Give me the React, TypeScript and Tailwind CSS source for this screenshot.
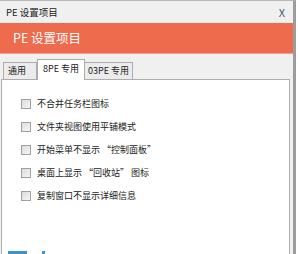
import React from 'react';

const font = { fontFamily: '"Microsoft YaHei", "Noto Sans CJK SC", "Liberation Sans", sans-serif' };

const options = [
  '不合并任务栏图标',
  '文件夹视图使用平铺模式',
  '开始菜单不显示 “控制面板”',
  '桌面上显示 “回收站” 图标',
  '复制窗口不显示详细信息',
];

export default function App() {
  return (
    <div className="w-[298px] h-[254px] overflow-hidden bg-white" style={font}>
      <div className="w-[296px] h-[254px] bg-[#f0f0f0] border-t border-[#b8b8b8] border-r-[3px] border-r-[#9c9c9c] flex flex-col">
        {/* title bar */}
        <div className="h-[22px] flex items-center justify-between pl-[6px] pr-[8px] text-[9.5px] text-[#222] whitespace-nowrap">
          <span>PE 设置项目</span>
          <span className="text-[11px] text-[#4a5a70]">X</span>
        </div>

        {/* banner */}
        <div className="h-[31px] bg-[#ee6b4d] border-b border-[#f4a18c] flex items-center pl-[13px] text-[12.5px] text-white whitespace-nowrap">
          PE 设置项目
        </div>

        {/* tabs */}
        <div className="h-[25px] flex items-end pl-[3px] text-[9px] text-[#222] whitespace-nowrap">
          <div className="w-[34px] h-[17px] border border-b-0 border-[#adadad] bg-[#ececec] flex items-center pl-[4px]">通用</div>
          <div className="w-[48px] h-[21px] border border-b-0 border-[#adadad] bg-white flex items-center justify-center pb-[3px] relative z-10 mb-[-1px]">8PE 专用</div>
          <div className="w-[48px] h-[17px] border border-b-0 border-l-0 border-[#adadad] bg-[#ececec] flex items-center justify-center">03PE 专用</div>
        </div>

        {/* panel */}
        <div className="flex-1 ml-[1px] mr-[3px] bg-white border border-[#adadad] border-b-0 relative">
          <div className="flex flex-col gap-[10px] pt-[17px] pl-[19px] text-[9px] text-[#222] whitespace-nowrap">
            {options.map((o) => (
              <label key={o} className="flex items-center gap-[6px] h-[13px]">
                <span className="w-[10px] h-[10px] border border-[#a0a0a0] bg-gradient-to-br from-[#dcdcdc] to-[#f6f6f6]" />
                <span>{o}</span>
              </label>
            ))}
          </div>
          <div className="absolute left-[6px] bottom-0 w-[19px] h-[3px] bg-[#3a94cf]" />
          <div className="absolute left-[40px] bottom-0 w-[3px] h-[3px] bg-[#3a94cf]" />
        </div>
      </div>
    </div>
  );
}
